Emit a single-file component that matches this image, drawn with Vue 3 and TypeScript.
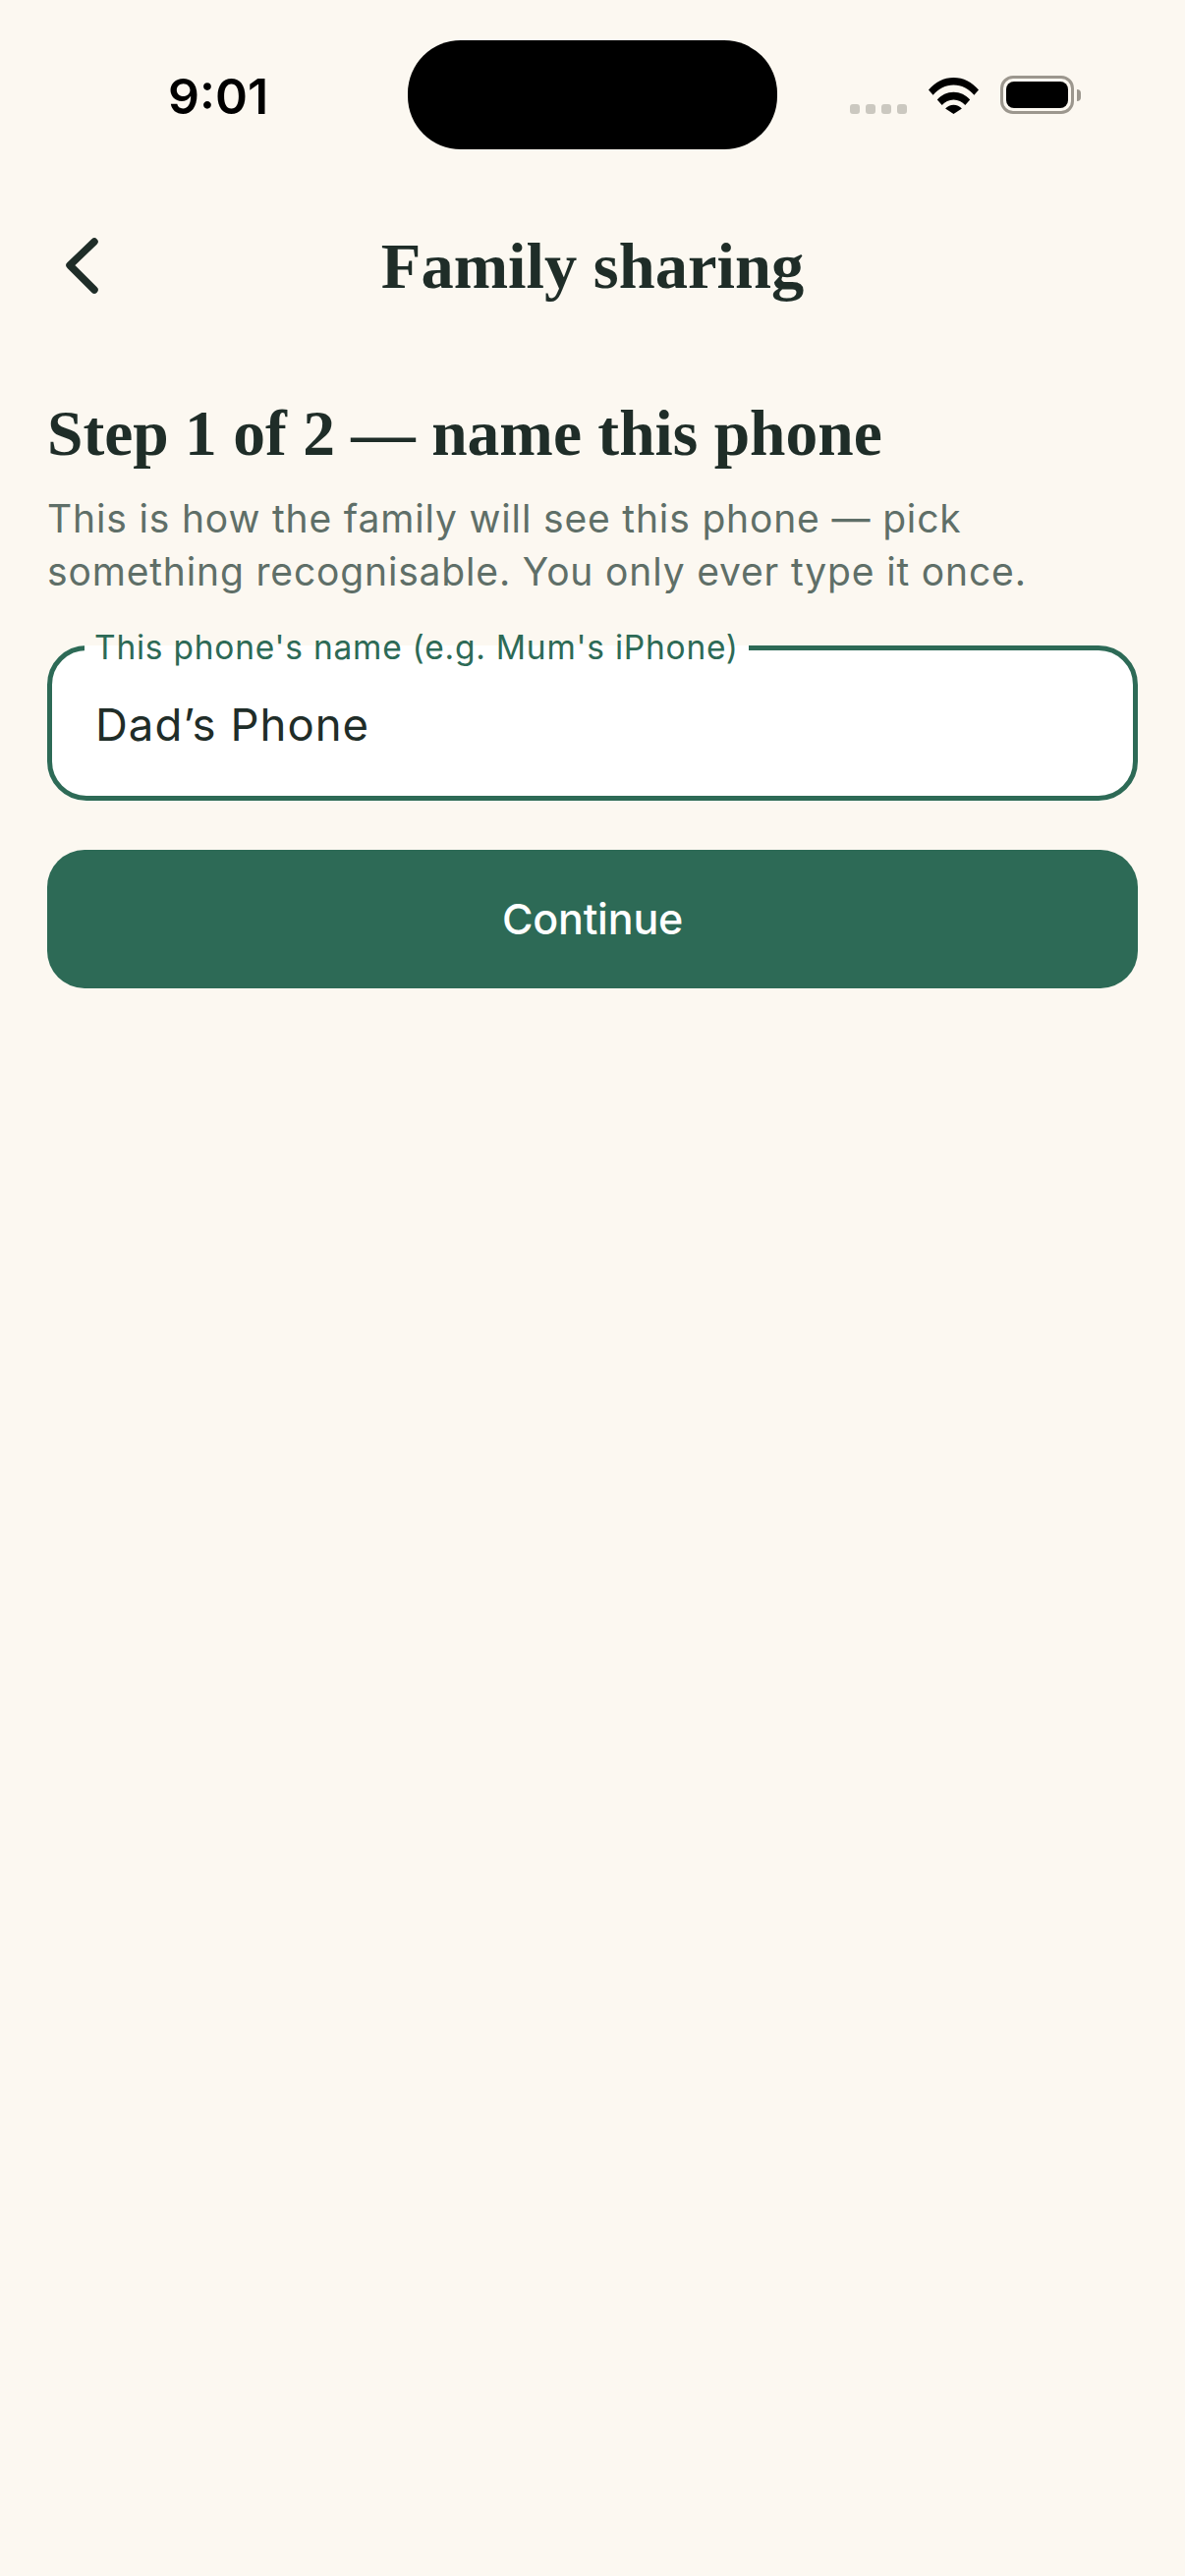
<script setup lang="ts">
const title = "Family sharing";
const step = "Step 1 of 2 — name this phone";
const hint = "This is how the family will see this phone — pick something recognisable. You only ever type it once.";
const fieldLabel = "This phone's name (e.g. Mum's iPhone)";
const phoneName = "Dad’s Phone";
</script>

<template>
  <div class="screen">
    <div class="status">
      <span class="time">9:01</span>
      <div class="island"></div>
      <div class="signals">
        <div class="dots"><i></i><i></i><i></i><i></i></div>
        <svg class="wifi" width="51" height="37" viewBox="0 0 51 37">
          <path d="M0 12.5C6.8 4.6 15.6 0 25.5 0S44.200 4.600 51 12.500L46.400 17.800C41 11.400 33.800 7.600 25.500 7.600S10 11.400 4.600 17.800Z" />
          <path d="M8.800 22.500C13 17.700 19 14.800 25.500 14.800S38 17.700 42.200 22.500L37.300 28C34.300 24.600 30.100 22.500 25.500 22.500S16.700 24.600 13.700 28Z" />
          <path d="M17.100 31.400C19.300 29.100 22.300 27.700 25.500 27.700S31.700 29.100 33.900 31.400L25.500 37Z" />
        </svg>
        <div class="battery">
          <div class="battery-level"></div>
        </div>
        <div class="battery-nub"></div>
      </div>
    </div>

    <header class="nav">
      <button class="back" aria-label="Back">
        <svg width="40" height="64" viewBox="0 0 40 64" fill="none">
          <path d="M32 8 7 32l25 25" stroke="#1f2d28" stroke-width="7.500" stroke-linecap="round" stroke-linejoin="round" />
        </svg>
      </button>
      <h1 class="title">{{ title }}</h1>
    </header>

    <main class="content">
      <h2 class="step">{{ step }}</h2>
      <p class="hint">{{ hint }}</p>
      <fieldset class="field">
        <legend class="field-label">{{ fieldLabel }}</legend>
        <div class="field-value">{{ phoneName }}</div>
      </fieldset>
      <button class="continue">Continue</button>
    </main>
  </div>
</template>

<style scoped>
.screen {
  width: 1206px;
  height: 2622px;
  background: #fcf8f1;
  color: #1f2d28;
  font-family: "Inter", "Open Sans", sans-serif;
  overflow: hidden;
}

.status {
  position: relative;
  height: 194px;
  display: flex;
  justify-content: space-between;
  padding: 77px 106px 0 171px;
  box-sizing: border-box;
}

.time {
  font-size: 50px;
  line-height: 42px;
  font-weight: 600;
  color: #000;
}

.island {
  position: absolute;
  left: 415px;
  top: 41px;
  width: 376px;
  height: 111px;
  border-radius: 54px;
  background: #000;
}

.signals {
  display: flex;
  align-items: flex-start;
}

.dots {
  display: flex;
  gap: 6px;
  margin-top: 29px;
  margin-right: 22px;
}

.dots i {
  display: block;
  width: 10px;
  height: 10px;
  border-radius: 3px;
  background: #cbc8c0;
}

.wifi {
  fill: #000;
  margin-top: 2px;
  margin-right: 22px;
}

.battery {
  width: 75px;
  height: 39px;
  box-sizing: border-box;
  border: 3px solid #9c978e;
  border-radius: 13px;
  padding: 3px;
}

.battery-level {
  height: 100%;
  border-radius: 8px;
  background: #000;
}

.battery-nub {
  width: 4px;
  height: 12px;
  margin-top: 14px;
  margin-left: 3px;
  border-radius: 0 4px 4px 0;
  background: #9c978e;
}

.nav {
  position: relative;
  height: 211px;
  display: flex;
  align-items: flex-start;
  justify-content: center;
}

.back {
  position: absolute;
  left: 64px;
  top: 44px;
  padding: 0;
  border: 0;
  background: none;
  line-height: 0;
}

.title {
  margin: 41px 0 0;
  font-family: "Liberation Serif", serif;
  font-size: 66.500px;
  line-height: 72px;
  font-weight: 700;
  color: #1f2d28;
}

.content {
  display: flex;
  flex-direction: column;
  padding: 0 48px;
}

.step {
  margin: 0;
  font-family: "Liberation Serif", serif;
  font-size: 65.500px;
  line-height: 72px;
  font-weight: 700;
  color: #1f2d28;
}

.hint {
  margin: 24px 0 0;
  font-size: 39px;
  line-height: 54px;
  letter-spacing: 0.840px;
  color: #5f6f68;
}

.field {
  margin: 30px 0 0;
  min-width: 0;
  height: 176px;
  box-sizing: border-box;
  padding: 0 44px;
  border: 5px solid #2d6a56;
  border-radius: 40px;
  background: #fff;
}

.field-label {
  padding: 0 10px;
  margin-left: -11px;
  font-size: 33.500px;
  line-height: 40px;
  letter-spacing: 0.760px;
  color: #2d6a56;
}

.field-value {
  margin-top: 31px;
  font-size: 45.500px;
  line-height: 56px;
  letter-spacing: 1px;
  color: #1f2d28;
}

.continue {
  height: 141px;
  margin-top: 50px;
  padding: 0 0 2px;
  border: 0;
  border-radius: 38px;
  background: #2d6a56;
  color: #fff;
  font-family: inherit;
  font-size: 43px;
  font-weight: 500;
  letter-spacing: -0.200px;
}
</style>

<style>
body {
  background: #fcf8f1;
}
</style>
